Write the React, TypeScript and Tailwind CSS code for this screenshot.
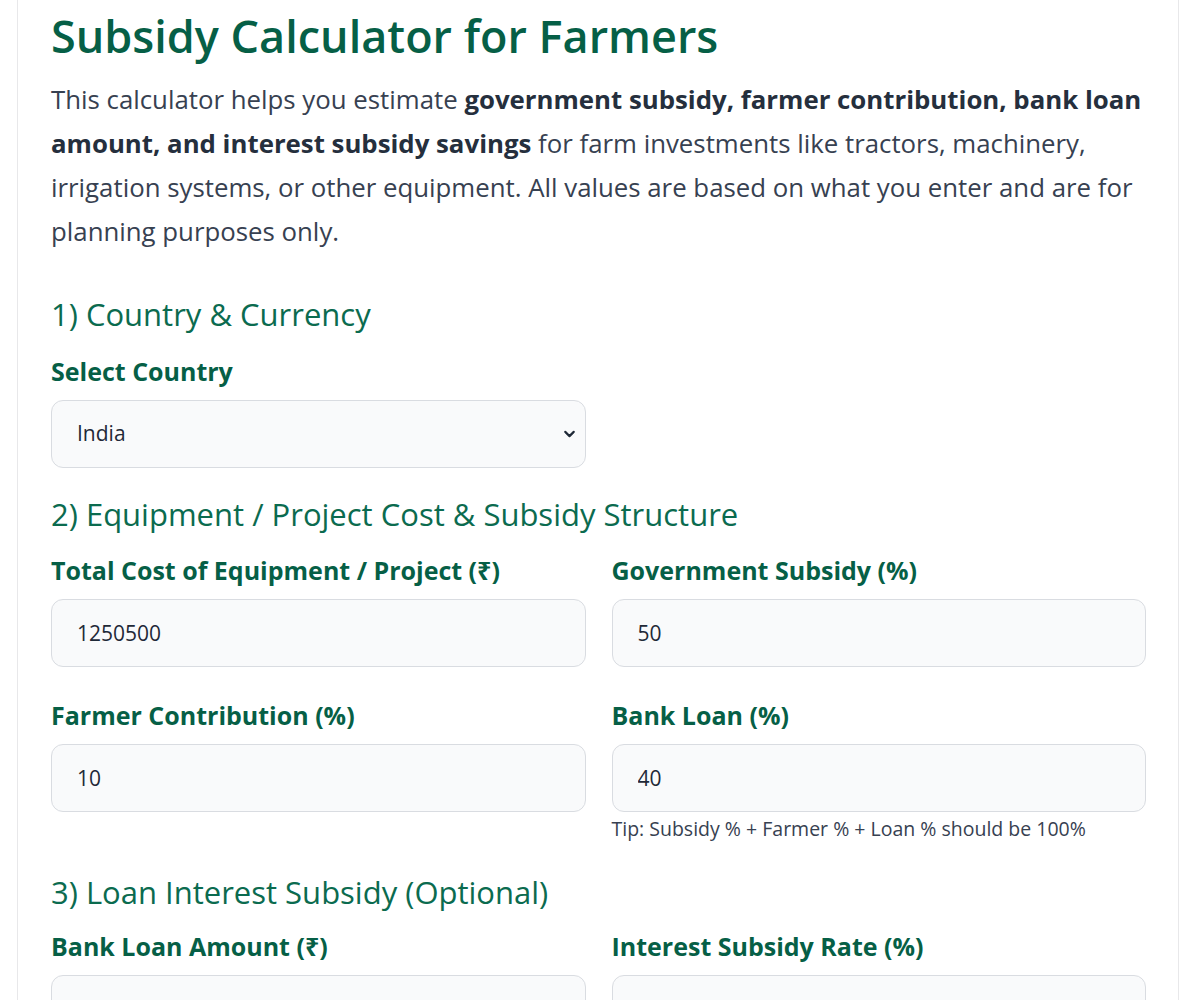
import { ChevronDown } from "lucide-react";

const font = { fontFamily: '"Open Sans", "Noto Sans", sans-serif' };

function Field({
  label,
  value,
  tip,
}: {
  label: string;
  value?: string;
  tip?: string;
}) {
  return (
    <div className="flex flex-col">
      <label className="text-[25px] font-bold leading-[34px] text-[#065f46]">
        {label}
      </label>
      <input
        className="mt-[12px] h-[68px] w-full rounded-[12px] border border-[#d9dce1] bg-[#f9fafb] px-[25px] text-[21px] text-[#1f2937] outline-none"
        defaultValue={value}
      />
      {tip && (
        <p className="mt-[3px] text-[19.5px] leading-[28px] text-[#374151]">{tip}</p>
      )}
    </div>
  );
}

function SectionTitle({ children }: { children: React.ReactNode }) {
  return (
    <h2 className="text-[31px] font-normal leading-[40px] text-[#0b6b4f]">
      {children}
    </h2>
  );
}

export default function App() {
  return (
    <div className="min-h-screen bg-white pl-[17px] pr-[21px]" style={font}>
      <div className="min-h-screen border-x border-[#e8e8ea] pl-[33px] pr-[32px] pt-[6px] pb-10">
        <h1 className="text-[45px] font-semibold leading-[60px] text-[#065f46]">
          Subsidy Calculator for Farmers
        </h1>

        <p className="mt-[11px] text-[25.8px] leading-[44px] text-[#374151]">
          This calculator helps you estimate{" "}
          <strong className="font-bold text-[#252f3d]">
            government subsidy, farmer contribution, bank loan amount, and
            interest subsidy savings
          </strong>{" "}
          for farm investments like tractors, machinery, irrigation systems, or
          other equipment. All values are based on what you enter and are for
          planning purposes only.
        </p>

        {/* 1) Country */}
        <div className="mt-[41px]">
          <SectionTitle>1) Country &amp; Currency</SectionTitle>
          <div className="mt-[20px] grid grid-cols-2 gap-x-[26px]">
            <div className="flex flex-col">
              <label className="text-[25px] font-bold leading-[34px] text-[#065f46]">
                Select Country
              </label>
              <div className="relative mt-[12px]">
                <select
                  className="h-[68px] w-full appearance-none rounded-[12px] border border-[#d9dce1] bg-[#f9fafb] px-[25px] text-[21px] text-[#1f2937] outline-none"
                  defaultValue="India"
                >
                  <option>India</option>
                  <option>Other</option>
                </select>
                <ChevronDown
                  className="pointer-events-none absolute right-[8px] top-1/2 h-[17px] w-[17px] -translate-y-1/2 text-[#1f2937]"
                  strokeWidth={3}
                />
              </div>
            </div>
          </div>
        </div>

        {/* 2) Cost & structure */}
        <div className="mt-[26px]">
          <SectionTitle>2) Equipment / Project Cost &amp; Subsidy Structure</SectionTitle>
          <div className="mt-[19px] grid grid-cols-2 items-start gap-x-[26px] gap-y-[31px]">
            <Field label="Total Cost of Equipment / Project (₹)" value="1250500" />
            <Field label="Government Subsidy (%)" value="50" />
            <Field label="Farmer Contribution (%)" value="10" />
            <Field
              label="Bank Loan (%)"
              value="40"
              tip="Tip: Subsidy % + Farmer % + Loan % should be 100%"
            />
          </div>
        </div>

        {/* 3) Interest subsidy */}
        <div className="mt-[29px]">
          <SectionTitle>3) Loan Interest Subsidy (Optional)</SectionTitle>
          <div className="mt-[17px] grid grid-cols-2 gap-x-[26px] gap-y-[31px]">
            <Field label="Bank Loan Amount (₹)" />
            <Field label="Interest Subsidy Rate (%)" />
          </div>
        </div>
      </div>
    </div>
  );
}
